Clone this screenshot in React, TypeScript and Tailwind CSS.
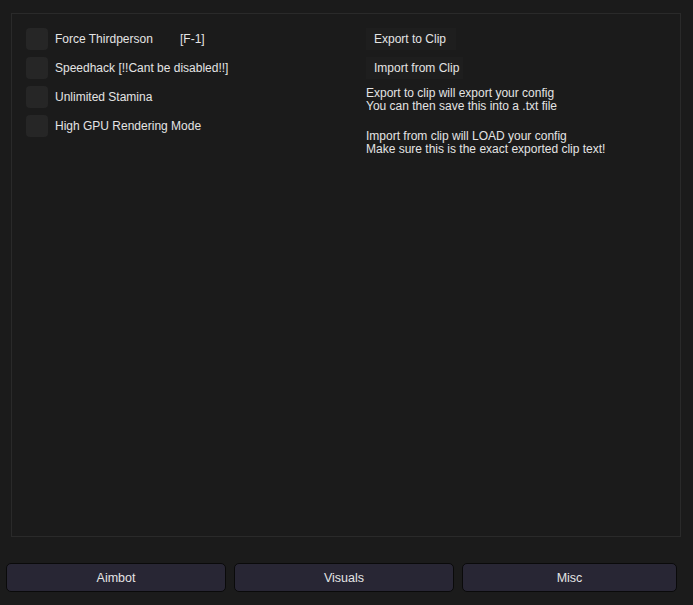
import React from "react";

const options = [
  { label: "Force Thirdperson", key: "[F-1]" },
  { label: "Speedhack [!!Cant be disabled!!]" },
  { label: "Unlimited Stamina" },
  { label: "High GPU Rendering Mode" },
];

function Check({ label, hotkey }: { label: string; hotkey?: string }) {
  return (
    <div className="flex items-center h-[22px]">
      <div className="w-[22px] h-[22px] rounded-[4px] bg-[#262626]" />
      <span className="ml-[7px] w-[125px] whitespace-nowrap">{label}</span>
      {hotkey && <span>{hotkey}</span>}
    </div>
  );
}

export default function App() {
  const tabs = ["Aimbot", "Visuals", "Misc"];
  return (
    <div
      className="h-[605px] w-[693px] bg-[#1b1b1b] text-[#e4e4e4] text-[12px] leading-[14px] flex flex-col"
      style={{ fontFamily: '"Liberation Sans", Arial, sans-serif' }}
    >
      <div className="ml-[11px] mt-[13px] w-[670px] h-[524px] border border-[#2a2a2a] flex pl-[14px] pt-[14px]">
        <div className="w-[340px] flex flex-col gap-[7px]">
          {options.map((o) => (
            <Check key={o.label} label={o.label} hotkey={o.key} />
          ))}
        </div>
        <div className="flex flex-col items-start">
          <button className="h-[22px] pl-[8px] pr-[10px] bg-[#1e1e1e] text-[#e4e4e4]">Export to Clip</button>
          <button className="h-[22px] pl-[8px] pr-[4px] mt-[7px] bg-[#1e1e1e] text-[#e4e4e4]">Import from Clip</button>
          <div className="mt-[8px] leading-[13px]">
            <p>Export to clip will export your config</p>
            <p>You can then save this into a .txt file</p>
          </div>
          <div className="mt-[17px] leading-[13px]">
            <p>Import from clip will LOAD your config</p>
            <p>Make sure this is the exact exported clip text!</p>
          </div>
        </div>
      </div>
      <div className="flex gap-[8px] ml-[6px] mt-[26px]">
        {tabs.map((t, i) => (
          <button
            key={t}
            className={`${i === 2 ? "w-[215px]" : "w-[220px]"} h-[29px] rounded-[5px] border border-[#0a0a0a] bg-[#282634] text-[#e4e4e4] text-[12.5px]`}
          >
            {t}
          </button>
        ))}
      </div>
    </div>
  );
}
